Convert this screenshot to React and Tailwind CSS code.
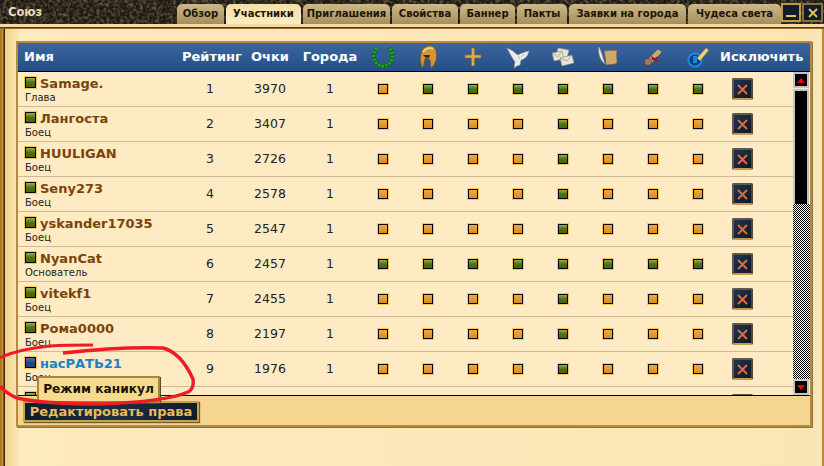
const tabs = [
  { label: 'Обзор', width: 'w-[47px]' },
  { label: 'Участники', width: 'w-[75px]', active: true },
  { label: 'Приглашения', width: 'w-[87px]' },
  { label: 'Свойства', width: 'w-[66px]' },
  { label: 'Баннер', width: 'w-[55px]' },
  { label: 'Пакты', width: 'w-[50px]' },
  { label: 'Заявки на города', width: 'w-[117px]' },
  { label: 'Чудеса света', width: 'w-[93px]' },
];

const onlyMail = [0, 0, 0, 0, 1, 0, 0, 0];
const allOn = [1, 1, 1, 1, 1, 1, 1, 1];

const members = [
  { name: 'Samage.', role: 'Глава', points: 3970, perms: [0, 1, 1, 1, 1, 1, 1, 1] },
  { name: 'Лангоста', role: 'Боец', points: 3407, perms: onlyMail },
  { name: 'HUULIGAN', role: 'Боец', points: 2726, perms: onlyMail },
  { name: 'Seny273', role: 'Боец', points: 2578, perms: onlyMail },
  { name: 'yskander17035', role: 'Боец', points: 2547, perms: onlyMail },
  { name: 'NyanCat', role: 'Основатель', points: 2457, perms: allOn },
  { name: 'vitekf1', role: 'Боец', points: 2455, perms: onlyMail },
  { name: 'Рома0000', role: 'Боец', points: 2197, perms: onlyMail },
  { name: 'насРАТЬ21', role: 'Боец', points: 1976, perms: onlyMail, away: true },
];

const Wreath = () => (
  <svg width="24" height="24" viewBox="0 0 24 24">
    <path d="M6 3C0 9 2 20 12 21C22 20 24 9 18 3" fill="none" stroke="#0d5c16" strokeWidth="3.8" />
    <path d="M6 3C0 9 2 20 12 21C22 20 24 9 18 3" fill="none" stroke="#22a12c" strokeWidth="3.2" strokeDasharray="2.5 1.2" />
  </svg>
);

const Helmet = () => (
  <svg width="24" height="24" viewBox="0 0 24 24">
    <path d="M5 9C6 3 11 0 16 1C21 3 21 10 20 15C19 18 18 21 15 23L14 15L10 12L9 14L7 23C4 19 4 13 5 9Z" fill="#d0953a" stroke="#7a4d14" strokeWidth="0.7" />
    <path d="M7 7C9 4 13 2 17 4" fill="none" stroke="#f3d07f" strokeWidth="1.8" />
    <path d="M7 10L14 10L13 13L9 12Z" fill="#3c2408" />
  </svg>
);

const Cross = () => (
  <svg width="24" height="24" viewBox="0 0 24 24">
    <path d="M10.5 3H13.5V10H20V13H13.5V21H10.5V13H4V10H10.5Z" fill="#dba94e" stroke="#8f6a2c" strokeWidth="0.6" />
  </svg>
);

const Dove = () => (
  <svg width="24" height="24" viewBox="0 0 24 24">
    <path d="M1 3L7 6C9 8 10 9 12 10C15 8 19 7 23 6C22 11 19 14 15 15L14 20L11 21L8 23L9 17C7 14 4 9 1 3Z" fill="#ecebe4" stroke="#8d8d88" strokeWidth="0.5" />
    <path d="M12 11L14 14M18 9L15 12" stroke="#a9a8a0" strokeWidth="0.8" />
  </svg>
);

const Letters = () => (
  <svg width="24" height="24" viewBox="0 0 24 24">
    <g fill="#e8e4d6" stroke="#8b877a" strokeWidth="0.6">
      <path d="M7 3L18 5L16 13L5 11Z" />
      <path d="M1 8L11 6L13 14L3 16Z" />
      <path d="M9 13L21 10L23 18L11 21Z" />
    </g>
    <path d="M9 13L16 16L21 10M1 8L7 12L11 6" fill="none" stroke="#8b877a" strokeWidth="0.6" />
  </svg>
);

const Scroll = () => (
  <svg width="24" height="24" viewBox="0 0 24 24">
    <path d="M3 2C2 8 4 15 9 19C7 14 6 8 3 2Z" fill="#f1efe4" stroke="#a7a392" strokeWidth="0.5" />
    <path d="M8 6C12 5 17 6 21 5C20 9 21 14 21 18C18 20 13 19 10 20C10 15 9 10 8 6Z" fill="#cfa969" stroke="#7c5d2c" strokeWidth="0.5" />
  </svg>
);

const Seal = () => (
  <svg width="24" height="24" viewBox="0 0 24 24">
    <path d="M6 15L17 4L21 7L10 19Z" fill="#c9a878" stroke="#6e5432" strokeWidth="0.5" />
    <circle cx="7" cy="17" r="3.6" fill="#a08058" stroke="#51381c" strokeWidth="0.6" />
    <path d="M10 11L14 13L17 11L16 15L19 17L14 16L11 15Z" fill="#a5172a" />
  </svg>
);

const Quill = () => (
  <svg width="24" height="24" viewBox="0 0 24 24">
    <circle cx="9" cy="15" r="6.6" fill="#0b3f7c" stroke="#0f8fe8" strokeWidth="2" />
    <path d="M7 11H11V18H7Z" fill="#1a86d8" />
    <path d="M11 13L20 3L23 5L14 16Z" fill="#ecd27f" stroke="#7a6126" strokeWidth="0.5" />
  </svg>
);

const headerIcons = [Wreath, Helmet, Cross, Dove, Letters, Scroll, Seal, Quill];

const Check = ({ on }) => (
  <div className="w-3 h-3 p-px bg-[#f7c468]">
    <div
      className={`w-full h-full border border-black ${
        on
          ? 'bg-gradient-to-b from-[#8fae55] via-[#4f7016] to-[#446512]'
          : 'bg-gradient-to-b from-[#ecaa40] to-[#d88d22]'
      }`}
    />
  </div>
);

const StatusBox = ({ away }) => (
  <div className="w-[13px] h-[13px] p-px bg-[#f7c468] shrink-0">
    <div
      className={`w-full h-full border border-black ${
        away
          ? 'bg-gradient-to-b from-[#4a6ca0] via-[#244a86] to-[#1d3f78]'
          : 'bg-gradient-to-b from-[#8fae55] via-[#4f7016] to-[#446512]'
      }`}
    />
  </div>
);

const KickButton = () => (
  <div className="w-[21px] h-[22px] border-2 border-[#5f5846] rounded-[2px] bg-gradient-to-br from-[#1f3650] to-[#0e1825] border-b-[#c79a48] border-r-[#4d4a40] flex items-center justify-center">
    <svg width="11" height="11" viewBox="0 0 11 11">
      <path d="M1 1L10 10M10 1L1 10" stroke="#dd6a45" strokeWidth="2" />
    </svg>
  </div>
);

const ScrollArrow = ({ up }) => (
  <div className="w-4 h-4 bg-black border-2 border-[#c4c4c4] flex items-center justify-center shrink-0">
    <svg width="8" height="5" viewBox="0 0 8 5">
      <path d={up ? 'M0 5H8L4 0Z' : 'M0 0H8L4 5Z'} fill="#f00000" />
    </svg>
  </div>
);

const Columns = ({ rank, points, city }) => (
  <>
    <div className="w-[56px] text-center">{rank}</div>
    <div className="w-[50px] ml-[7px] text-center">{points}</div>
    <div className="w-[60px] ml-[5px] text-center">{city}</div>
  </>
);

const Row = ({ member, index }) => (
  <div className="h-[35px] shrink-0 flex items-center border-b border-[#cdbb94] text-[12.5px] text-[#222]">
    <div className="w-[164px] h-full pl-[6px] pt-[4px]">
      <div className="flex items-center gap-[3px] h-[13px]">
        <StatusBox away={member.away} />
        <span className={`pt-[2px] font-bold text-[13px] ${member.away ? 'text-[#1583c4]' : 'text-[#7c4309]'}`}>
          {member.name}
        </span>
      </div>
      <div className="text-[10px] leading-[12px] mt-[3px] pl-px">{member.role}</div>
    </div>
    <Columns rank={index + 1} points={member.points} city={1} />
    {member.perms.map((on, i) => (
      <div key={i} className="w-[45px] flex justify-center">
        <Check on={on === 1} />
      </div>
    ))}
    <div className="w-[45px] flex justify-center">
      <KickButton />
    </div>
  </div>
);

// row that is scrolled almost out of view, only the tops of its boxes show
const ClippedRow = () => (
  <div className="h-[35px] shrink-0 flex items-center">
    <div className="w-[164px] h-full pl-[6px] pt-[4px]">
      <StatusBox />
    </div>
    <div className="w-[360px] ml-[178px]" />
    <div className="w-[45px] flex justify-center">
      <KickButton />
    </div>
  </div>
);

const App = () => {
  return (
    <div className="relative w-[824px] h-[466px] overflow-hidden flex flex-col bg-[#fdeabd] font-['DejaVu_Sans',sans-serif]">
      <header className="relative h-[24px] shrink-0 flex bg-[#1f1a11] overflow-hidden">
        <svg className="absolute inset-0" width="824" height="24">
          <filter id="grain">
            <feTurbulence type="fractalNoise" baseFrequency="0.3" numOctaves="3" />
            <feColorMatrix values="0 0 0 0 0.3 0 0 0 0 0.25 0 0 0 0 0.16 0 0 0 1.4 -0.55" />
          </filter>
          <rect width="824" height="24" filter="url(#grain)" />
        </svg>
        <div className="relative w-[177px] pl-2 pt-[4px] text-[11.5px] font-bold text-[#e6dcbc]">Союз</div>
        <div className="relative flex gap-[2px] pt-[4px] h-full">
          {tabs.map((tab) => (
            <div
              key={tab.label}
              className={`${tab.width} rounded-t-[5px] text-center text-[10px] font-bold leading-[19px] text-[#1d1608] ${
                tab.active
                  ? 'bg-gradient-to-b from-[#f5dfa6] to-[#fbeec8] h-[24px] relative z-10'
                  : 'bg-gradient-to-b from-[#cdb886] to-[#a58f5f] h-[20px]'
              }`}
            >
              {tab.label}
            </div>
          ))}
        </div>
        <div className="relative flex gap-px pt-[3px] h-full">
          <div className="w-[20px] h-[19px] bg-[#101c2c] border-2 border-[#c09a48] flex items-end justify-center pb-[3px]">
            <div className="w-[10px] h-[2px] bg-[#e6c25f]" />
          </div>
          <div className="w-[21px] h-[19px] bg-[#101c2c] border-2 border-[#8a6f36] flex items-center justify-center">
            <svg width="10" height="10" viewBox="0 0 10 10">
              <path d="M1 1L9 9M9 1L1 9" stroke="#e6c25f" strokeWidth="1.8" />
            </svg>
          </div>
        </div>
      </header>

      <div className="h-[3px] shrink-0 bg-[#f3dca3]" />
      <div className="h-[2px] shrink-0 bg-gradient-to-b from-[#2a2318] to-[#b98a3c]" />

      <main className="flex-1 min-h-0 flex">
        <div className="w-[5px] shrink-0 bg-gradient-to-r from-[#a8701c] via-[#c48d30] to-[#1c1408]" />
        <div className="flex-1 min-w-0 pl-[11px] pt-[12px] bg-gradient-to-r from-[#f2d08c] via-[#fdeabd] via-[2%] to-[#fbe5b4]">
          <section className="w-[796px] h-[386px] border-2 border-[#b68a3c] bg-[#f6d590] flex flex-col shadow-[1px_1px_0_#8a7344]">
            <div className="h-[29px] shrink-0 flex items-center border-b border-black bg-gradient-to-b from-[#3b659b] to-[#264f89] text-[13px] font-bold text-white">
              <div className="w-[164px] pl-[6px]">Имя</div>
              <Columns rank="Рейтинг" points="Очки" city="Города" />
              {headerIcons.map((Icon, i) => (
                <div key={i} className="w-[45px] flex justify-center">
                  <Icon />
                </div>
              ))}
              <div className="w-[83px] text-center">Исключить</div>
            </div>

            <div className="h-[324px] shrink-0 flex border-b border-black bg-[#feeac3]">
              <div className="w-[775px] flex flex-col overflow-hidden">
                {members.map((member, i) => (
                  <Row key={i} member={member} index={i} />
                ))}
                <ClippedRow />
              </div>
              <div className="w-[17px] flex flex-col">
                <ScrollArrow up />
                <div className="w-4 h-[115px] shrink-0 mt-px bg-black border-x-2 border-t-2 border-[#c4c4c4]" />
                <div className="flex-1 bg-[repeating-conic-gradient(#000_0_25%,#fff_0_50%)] bg-[length:2px_2px]" />
                <ScrollArrow />
              </div>
            </div>

            <div className="pl-[5px] pt-[5px]">
              <div className="w-[176px] h-[21px] border-2 border-[#c9a04c] bg-gradient-to-r from-[#0f1c2e] via-[#1b3045] to-[#0f1c2e] text-[13px] font-bold leading-[17px] text-center text-[#e8bb5c] whitespace-nowrap shadow-[1px_1px_1px_#6b5a34]">
                Редактировать права
              </div>
            </div>
          </section>
        </div>
        <div className="w-[2px] shrink-0 bg-[#b98a3c]" />
      </main>

      <div className="absolute left-[37px] top-[376px] w-[123px] h-[27px] border-2 border-[#a8843f] bg-[#f6da90] text-[12.2px] font-bold leading-[23px] text-center text-[#1a1408] shadow-[1px_1px_0_#5a4a28]">
        Режим каникул
      </div>

      <svg className="absolute inset-0 pointer-events-none" width="824" height="466">
        <path d="M0 358C10 353 30 348 50 346C65 345 80 345 93 345" fill="none" stroke="#ee1c25" strokeWidth="3" />
        <path
          d="M63 353C90 350 130 347 163 348C178 352 188 368 193 379C194 386 192 390 188 392C170 400 130 403 100 404C70 404 35 402 17 398C8 394 3 390 0 386"
          fill="none"
          stroke="#ee1c25"
          strokeWidth="3.4"
        />
      </svg>
    </div>
  );
};

export default App;
